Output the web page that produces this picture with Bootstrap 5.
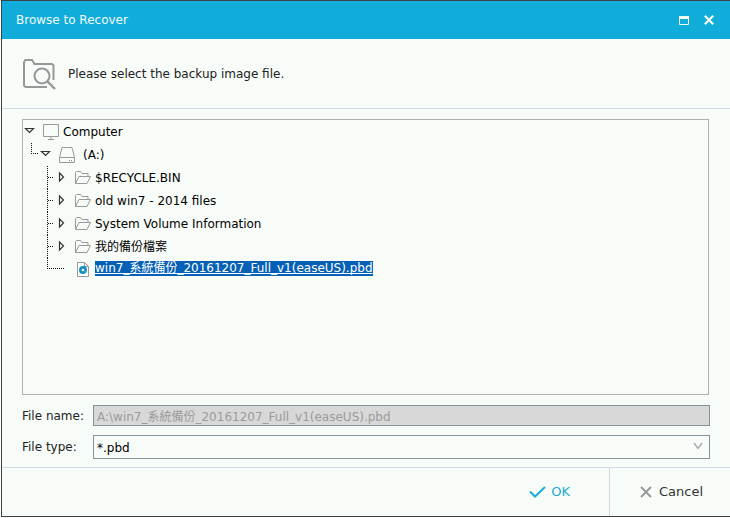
<!DOCTYPE html>
<html lang="en">
<head>
<meta charset="utf-8">
<meta name="viewport" content="width=device-width, initial-scale=1">
<title>Browse to Recover</title>
<link href="https://cdn.jsdelivr.net/npm/bootstrap@5.3.0/dist/css/bootstrap.min.css" rel="stylesheet">
<style>
  body { font: 12px/16px "DejaVu Sans", "Noto Sans CJK TC", sans-serif; color: #222; background: #f8fcf9; }
  .dialog { min-height: 100vh; padding: 0 0 1px 1px; background: #fff; }
  .frame { background: #f8fcf9; border: 1px solid #3d4245; border-right: 0; }
  .titlebar { background: #10acda; color: #f3fbfd; height: 38px; padding: 0 16px 0 14px; }
  .titlebar h1 { font-size: 12px; line-height: 16px; }
  .plain { background: none; border: 0; padding: 0; color: inherit; display: block; }
  .plain svg, .tree svg, .lead-in svg, .actions svg { display: block; flex: none; }
  .restore { margin-right: 15px; }
  .lead-in { height: 70px; padding: 0 20px; gap: 11px; border-bottom: 1px solid #d5dae2; }
  .content-area { padding: 10px 20px 8px 20px; }
  .tree { border: 1px solid #adb2b0; color: #000; margin: 0 1px 10px 0; }
  .tree li { height: 23px; }
  .tree .glyph { margin: 0 4px; }
  .tree .drive { margin-right: 8px; }
  .picked { background: #0560b6; color: #fff; text-decoration: underline 1px; text-underline-offset: 1px; text-decoration-skip-ink: none; height: 15px; line-height: 15px; margin-bottom: 2px; overflow: hidden; white-space: nowrap; }
  .picked:hover { color: #fff; }
  .field-label { width: 71px; flex: none; }
  .field-row + .field-row { margin-top: 9px; }
  .form-control.path, .form-select.kind { font-size: 12px; line-height: 16px; border: 1px solid #84949a; border-radius: 0; padding: 0 3px; min-height: 0; }
  .form-control.path { height: 21px; background: #d8d8d8; color: #9b9b9b; opacity: 1; }
  .form-select.kind { height: 24px; padding-top: 1px; color: #000; background: #f8fcf9 url("data:image/svg+xml,%3Csvg xmlns='http://www.w3.org/2000/svg' width='10' height='8' viewBox='0 0 10 8'%3E%3Cpath d='M1 1l4 5.5L9 1' fill='none' stroke='%23a0a5a8' stroke-width='1.3'/%3E%3C/svg%3E") no-repeat right 6px top 6px / 10px 8px; }
  .actions { height: 49px; border-top: 1px solid #d5dae2; font-size: 13px; }
  .actions button { gap: 5px; }
  .ok { color: #18acd8; padding-right: 39px !important; }
  .cancel { width: 121px; border-left: 1px solid #d5dae2 !important; padding-left: 30px !important; color: #333 !important; }
  .cancel.cancel { gap: 7px; }
</style>
<script src="https://cdn.jsdelivr.net/npm/bootstrap@5.3.0/dist/js/bootstrap.bundle.min.js"></script>
</head>
<body>
<svg class="d-none">
  <symbol id="open" viewBox="0 0 16 23"><path d="M2.500 8.500h8L6.500 12.500z" fill="#f8fcf9" stroke="#333" stroke-width="1.2"/></symbol>
  <symbol id="closed" viewBox="0 0 16 23"><path d="M4.500 7v8l4-4z" fill="#f8fcf9" stroke="#333" stroke-width="1.2"/></symbol>
  <symbol id="tee" viewBox="0 0 16 23"><path d="M8.500 0v23M9 11.500h6" fill="none" stroke="#111" stroke-dasharray="1 1"/></symbol>
  <symbol id="elbow" viewBox="0 0 16 23"><path d="M8.500 0v11M8 10.500h8" fill="none" stroke="#111" stroke-dasharray="1 1"/></symbol>
  <symbol id="dash" viewBox="0 0 16 23"><path d="M0 10.500h9" fill="none" stroke="#111" stroke-dasharray="1 1"/></symbol>
  <symbol id="folder" viewBox="0 0 16 16"><path d="M.5 13.500v-11l1-1h4l1.500 2h6v3M.5 13.500l3.500-7h11.500L12 13.500z" fill="none" stroke="#999"/></symbol>
</svg>
<div class="dialog d-flex">
  <div class="frame d-flex flex-column flex-grow-1">
    <header class="titlebar d-flex align-items-center">
      <h1 class="m-0 me-auto fw-normal">Browse to Recover</h1>
      <button class="plain restore" type="button" aria-label="Maximize"><svg width="10" height="9"><path d="M.5.5h9v8h-9z" fill="none" stroke="#f8fcf9"/><path d="M0 0h10v3H0z" fill="#f8fcf9"/></svg></button>
      <button class="plain" type="button" aria-label="Close"><svg width="10" height="10"><path d="M.8.8l8.400 8.400M9.200.8L.8 9.200" stroke="#f8fcf9" stroke-width="2.200"/></svg></button>
    </header>
    <div class="lead-in d-flex align-items-center">
      <svg width="35" height="32" viewBox="0 0 35 32"><g fill="none" stroke="#979797" stroke-width="2"><path d="M25 29H3.500L2 27.500V4l1.500-2H10l2.500 4h17.500l1.500 1.500V22"/><circle cx="20" cy="18" r="7.500"/><path d="M25.500 23.500l7.500 7.500" stroke-width="2.400"/></g></svg>
      <p class="m-0">Please select the backup image file.</p>
    </div>
    <main class="content-area d-flex flex-column flex-grow-1">
      <ul class="tree list-unstyled flex-grow-1">
        <li class="d-flex align-items-center">
          <button class="plain" type="button" aria-label="Collapse Computer"><svg width="16" height="23"><use href="#open"/></svg></button>
          <svg class="glyph" width="16" height="16"><path d="M.5.5h15v12H.5zM8 12.500v3M5 15.500h6" fill="none" stroke="#999"/></svg>
          <span>Computer</span>
        </li>
        <li class="d-flex align-items-center">
          <svg width="16" height="23"><use href="#elbow"/></svg>
          <button class="plain" type="button" aria-label="Collapse A:"><svg width="16" height="23"><use href="#open"/></svg></button>
          <svg class="glyph drive" width="16" height="16"><path d="M3 .5h10l2.500 10v5H.5v-5zM.5 10.500h15" fill="none" stroke="#999"/><path d="M10 13.500h1M12 13.500h1" stroke="#888"/></svg>
          <span>(A:)</span>
        </li>
        <li class="d-flex align-items-center ps-3">
          <svg width="16" height="23"><use href="#tee"/></svg>
          <button class="plain" type="button" aria-label="Expand $RECYCLE.BIN"><svg width="16" height="23"><use href="#closed"/></svg></button>
          <svg class="glyph" width="16" height="16"><use href="#folder"/></svg>
          <span>$RECYCLE.BIN</span>
        </li>
        <li class="d-flex align-items-center ps-3">
          <svg width="16" height="23"><use href="#tee"/></svg>
          <button class="plain" type="button" aria-label="Expand old win7 - 2014 files"><svg width="16" height="23"><use href="#closed"/></svg></button>
          <svg class="glyph" width="16" height="16"><use href="#folder"/></svg>
          <span>old win7 - 2014 files</span>
        </li>
        <li class="d-flex align-items-center ps-3">
          <svg width="16" height="23"><use href="#tee"/></svg>
          <button class="plain" type="button" aria-label="Expand System Volume Information"><svg width="16" height="23"><use href="#closed"/></svg></button>
          <svg class="glyph" width="16" height="16"><use href="#folder"/></svg>
          <span>System Volume Information</span>
        </li>
        <li class="d-flex align-items-center ps-3">
          <svg width="16" height="23"><use href="#tee"/></svg>
          <button class="plain" type="button" aria-label="Expand 我的備份檔案"><svg width="16" height="23"><use href="#closed"/></svg></button>
          <svg class="glyph" width="16" height="16"><use href="#folder"/></svg>
          <span>我的備份檔案</span>
        </li>
        <li class="d-flex align-items-center ps-3">
          <svg width="16" height="23"><use href="#elbow"/></svg>
          <svg width="16" height="23"><use href="#dash"/></svg>
          <svg class="glyph" width="16" height="16"><path d="M2.500.5h7l4 4v10h-11zM9.500.5v4h4" fill="#fff" stroke="#999"/><circle cx="8" cy="8" r="2.600" fill="none" stroke="#128fc6" stroke-width="2.800"/><path d="M6.800 8h2.400" stroke="#fff" stroke-width="1.400"/><path d="M9.500 10.500l1.500-1.500" stroke="#48b58a" stroke-width="1.500"/></svg>
          <a class="picked" href="#">win7_系統備份_20161207_Full_v1(easeUS).pbd</a>
        </li>
      </ul>
      <div class="field-row d-flex align-items-center">
        <label class="field-label" for="fname">File name:</label>
        <input class="form-control path" id="fname" type="text" value="A:\win7_系統備份_20161207_Full_v1(easeUS).pbd" disabled>
      </div>
      <div class="field-row d-flex align-items-center">
        <label class="field-label" for="ftype">File type:</label>
        <select class="form-select kind" id="ftype"><option>*.pbd</option></select>
      </div>
    </main>
    <footer class="actions d-flex justify-content-end">
      <button class="plain ok d-flex align-items-center" type="button"><svg width="17" height="12"><path d="M1 5.500l5 5L16 1" fill="none" stroke="#18acd8" stroke-width="2"/></svg>OK</button>
      <button class="plain cancel d-flex align-items-center" type="button"><svg width="12" height="12"><path d="M1 1l10 10M11 1L1 11" stroke="#999" stroke-width="2"/></svg>Cancel</button>
    </footer>
  </div>
</div>
</body>
</html>
